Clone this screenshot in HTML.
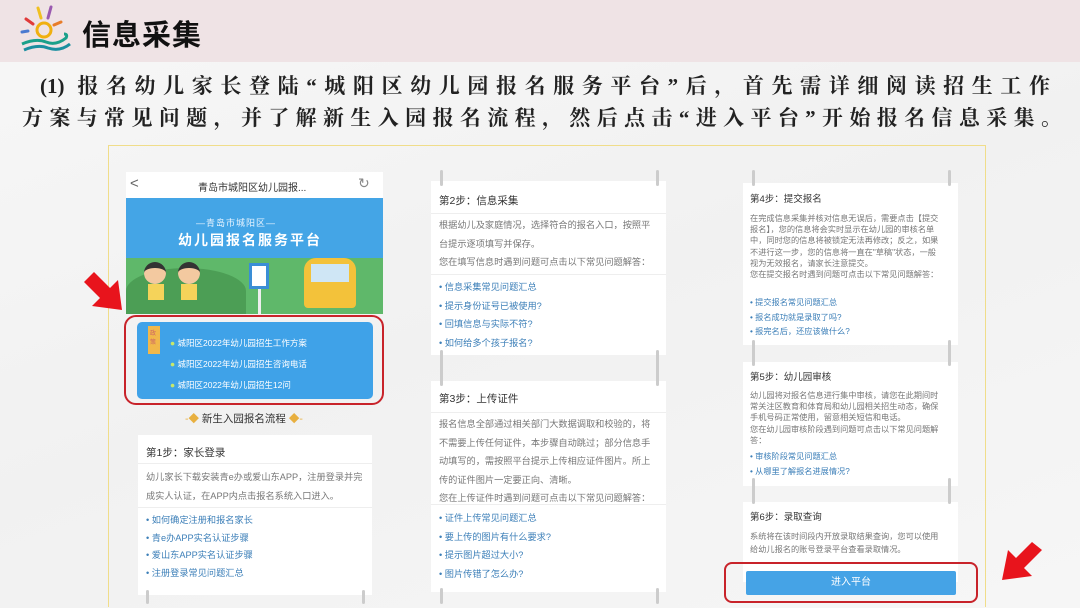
<!DOCTYPE html>
<html><head><meta charset="utf-8">
<style>
*{margin:0;padding:0;box-sizing:border-box}
body{width:1080px;height:608px;overflow:hidden;position:relative;background:linear-gradient(160deg,#f7f7f7 0%,#f1f1f1 50%,#f6f6f6 100%);font-family:"Liberation Sans","Noto Sans CJK SC",sans-serif}
.abs{position:absolute}
.hdr{left:0;top:0;width:1080px;height:62px;background:#efe3e5}
.title{left:82px;top:12px;font-size:29px;font-weight:bold;color:#111;letter-spacing:1px}
.para{font-family:"Liberation Serif","Noto Serif CJK SC",serif;font-weight:bold;font-size:21px;color:#222;white-space:nowrap;text-align:justify;text-align-last:justify}
.frame{left:108px;top:145px;width:878px;height:462px;border:1.5px solid #f0dd8a;border-bottom:none}
.card{background:#fff}
.h{font-size:10.5px;color:#333}
.t{font-size:9.2px;color:#777;line-height:18.5px}
.l{font-size:9.2px;color:#3c7fb8;line-height:18px}
.sm .t,.sm .l{font-size:8.2px;line-height:11.2px}
.sm .h{font-size:9.5px}
.pin{width:3px;background:#ccc;border-radius:2px}
</style></head><body>
<div class="abs hdr"></div>
<svg class="abs" style="left:16px;top:4px" width="60" height="54" viewBox="0 0 60 54">
<g stroke-width="3" stroke-linecap="round"><line x1="22" y1="4" x2="25" y2="14" stroke="#f0c020"/><line x1="35" y1="3" x2="32" y2="14" stroke="#9a5ab0"/><line x1="10" y1="15" x2="17" y2="20" stroke="#e03a3a"/><line x1="45" y1="18" x2="38" y2="21" stroke="#e87c2a"/><line x1="6" y1="28" x2="12" y2="27" stroke="#4a7ad0"/></g>
<circle cx="28" cy="26" r="7" fill="none" stroke="#f0b010" stroke-width="3"/>
<path d="M6 40 Q20 34 30 38 Q40 42 50 34 Q52 30 48 30" fill="none" stroke="#1aa08a" stroke-width="3"/>
<path d="M8 46 Q22 40 32 44 Q44 48 54 40" fill="none" stroke="#1a8fa0" stroke-width="3"/>
</svg>
<div class="abs title">信息采集</div>
<div class="abs para" style="left:40px;top:70px;width:1010px">(1) 报名幼儿家长登陆“城阳区幼儿园报名服务平台”后，首先需详细阅读招生工作</div>
<div class="abs para" style="left:22px;top:102px;width:1040px">方案与常见问题，并了解新生入园报名流程，然后点击“进入平台”开始报名信息采集。</div>
<div class="abs frame"></div>

<!-- col1 -->
<div class="abs card" style="left:126px;top:172px;width:257px;height:26px"></div>
<div class="abs" style="left:130px;top:175px;font-size:15px;color:#666">&lt;</div>
<div class="abs" style="left:198px;top:179px;font-size:10px;color:#333">青岛市城阳区幼儿园报...</div>
<div class="abs" style="left:358px;top:175px;font-size:14px;color:#888">↻</div>
<div class="abs" style="left:126px;top:198px;width:257px;height:116px;background:#44a5e6;overflow:hidden">
 <div class="abs" style="left:0;top:60px;width:257px;height:56px;background:#5fb86a"></div>
 <div class="abs" style="left:0;top:70px;width:120px;height:46px;background:#4c9e55;border-radius:50% 50% 0 0"></div>
 <div class="abs" style="left:70px;top:18px;font-size:9px;color:#e8f4ff;letter-spacing:1px">—青岛市城阳区—</div>
 <div class="abs" style="left:52px;top:32px;font-size:14px;font-weight:bold;color:#fff;letter-spacing:2px">幼儿园报名服务平台</div>
 <div class="abs" style="left:18px;top:64px;width:22px;height:22px;border-radius:50%;background:#f3c9a0;border-top:6px solid #333"></div>
 <div class="abs" style="left:22px;top:86px;width:16px;height:16px;background:#f5d35a"></div>
 <div class="abs" style="left:52px;top:64px;width:22px;height:22px;border-radius:50%;background:#f3c9a0;border-top:6px solid #333"></div>
 <div class="abs" style="left:55px;top:86px;width:16px;height:16px;background:#f5d35a"></div>
 <div class="abs" style="left:123px;top:65px;width:20px;height:26px;background:#fff;border:3px solid #3a8ed6"></div>
 <div class="abs" style="left:132px;top:91px;width:3px;height:25px;background:#eee"></div>
 <div class="abs" style="left:178px;top:60px;width:52px;height:50px;background:#f3c23a;border-radius:12px 12px 4px 4px"></div>
 <div class="abs" style="left:185px;top:66px;width:38px;height:18px;background:#cfe6f5"></div>
</div>
<div class="abs" style="left:137px;top:322px;width:236px;height:77px;background:#3fa2e8;border-radius:5px"></div>
<div class="abs" style="left:148px;top:326px;width:12px;height:28px;background:#f1b84a;font-size:6px;color:#c66;padding:2px">政策</div>
<div class="abs" style="left:170px;top:333px;font-size:8.5px;color:#fff;line-height:21px">
<div><span style="color:#c8e86a">●</span> 城阳区2022年幼儿园招生工作方案</div>
<div><span style="color:#c8e86a">●</span> 城阳区2022年幼儿园招生咨询电话</div>
<div><span style="color:#c8e86a">●</span> 城阳区2022年幼儿园招生12问</div></div>
<div class="abs" style="left:124px;top:315px;width:260px;height:90px;border:2.5px solid #c8232a;border-radius:12px"></div>
<div class="abs" style="left:185px;top:411px;font-size:10.5px;color:#333"><span style="color:#e8b040">-◆</span> 新生入园报名流程 <span style="color:#e8b040">◆-</span></div>
<div class="abs card" style="left:138px;top:435px;width:234px;height:160px">
 <div class="h" style="position:absolute;left:8px;top:10px">第1步：家长登录</div>
 <div style="position:absolute;left:0;top:28px;width:234px;border-top:1px solid #eee"></div>
 <div class="t" style="position:absolute;left:8px;top:33px;width:222px">幼儿家长下载安装青e办或爱山东APP，注册登录并完成实人认证，在APP内点击报名系统入口进入。</div>
 <div style="position:absolute;left:0;top:72px;width:234px;border-top:1px solid #eee"></div>
 <div class="l" style="position:absolute;left:8px;top:77px;line-height:17.5px">• 如何确定注册和报名家长<br>• 青e办APP实名认证步骤<br>• 爱山东APP实名认证步骤<br>• 注册登录常见问题汇总</div>
</div>

<!-- col2 -->
<div class="abs card" style="left:431px;top:181px;width:235px;height:174px">
 <div class="h" style="position:absolute;left:8px;top:12px">第2步：信息采集</div>
 <div style="position:absolute;left:0;top:32px;width:235px;border-top:1px solid #eee"></div>
 <div class="t" style="position:absolute;left:8px;top:35px;width:220px;line-height:18.5px">根据幼儿及家庭情况，选择符合的报名入口，按照平台提示逐项填写并保存。<br>您在填写信息时遇到问题可点击以下常见问题解答：</div>
 <div style="position:absolute;left:0;top:93px;width:235px;border-top:1px solid #eee"></div>
 <div class="l" style="position:absolute;left:8px;top:97px;line-height:18.5px">• 信息采集常见问题汇总<br>• 提示身份证号已被使用?<br>• 回填信息与实际不符?<br>• 如何给多个孩子报名?</div>
</div>
<div class="abs card" style="left:431px;top:381px;width:235px;height:211px">
 <div class="h" style="position:absolute;left:8px;top:10px">第3步：上传证件</div>
 <div style="position:absolute;left:0;top:31px;width:235px;border-top:1px solid #eee"></div>
 <div class="t" style="position:absolute;left:8px;top:34px;width:220px;line-height:18.5px">报名信息全部通过相关部门大数据调取和校验的，将不需要上传任何证件，本步骤自动跳过；部分信息手动填写的，需按照平台提示上传相应证件图片。所上传的证件图片一定要正向、清晰。<br>您在上传证件时遇到问题可点击以下常见问题解答：</div>
 <div style="position:absolute;left:0;top:123px;width:235px;border-top:1px solid #eee"></div>
 <div class="l" style="position:absolute;left:8px;top:128px;line-height:18.5px">• 证件上传常见问题汇总<br>• 要上传的图片有什么要求?<br>• 提示图片超过大小?<br>• 图片传错了怎么办?</div>
</div>

<!-- col3 -->
<div class="sm">
<div class="abs card" style="left:743px;top:183px;width:215px;height:162px">
 <div class="h" style="position:absolute;left:7px;top:8px">第4步：提交报名</div>
 <div class="t" style="position:absolute;left:7px;top:30px;width:194px">在完成信息采集并核对信息无误后，需要点击【提交报名】，您的信息将会实时显示在幼儿园的审核名单中，同时您的信息将被锁定无法再修改；反之，如果不进行这一步，您的信息将一直在"草稿"状态，一般视为无效报名，请家长注意提交。<br>您在提交报名时遇到问题可点击以下常见问题解答：</div>
 <div class="l" style="position:absolute;left:7px;top:113px;line-height:14.5px">• 提交报名常见问题汇总<br>• 报名成功就是录取了吗?<br>• 报完名后，还应该做什么?</div>
</div>
<div class="abs card" style="left:743px;top:362px;width:215px;height:124px">
 <div class="h" style="position:absolute;left:7px;top:7px">第5步：幼儿园审核</div>
 <div class="t" style="position:absolute;left:7px;top:28px;width:196px">幼儿园将对报名信息进行集中审核，请您在此期间时常关注区教育和体育局和幼儿园相关招生动态，确保手机号码正常使用，留意相关短信和电话。<br>您在幼儿园审核阶段遇到问题可点击以下常见问题解答：</div>
 <div class="l" style="position:absolute;left:7px;top:87px;line-height:15px">• 审核阶段常见问题汇总<br>• 从哪里了解报名进展情况?</div>
</div>
<div class="abs card" style="left:743px;top:502px;width:215px;height:80px">
 <div class="h" style="position:absolute;left:7px;top:7px">第6步：录取查询</div>
 <div class="t" style="position:absolute;left:7px;top:28px;width:196px;line-height:13px">系统将在该时间段内开放录取结果查询，您可以使用给幼儿报名的账号登录平台查看录取情况。</div>
</div>
</div>
<div class="abs" style="left:746px;top:571px;width:210px;height:24px;background:#45a3e6;border-radius:2px;color:#fff;font-size:10px;text-align:center;line-height:24px">进入平台</div>
<div class="abs" style="left:724px;top:562px;width:254px;height:41px;border:2.5px solid #c8232a;border-radius:8px"></div>

<!-- pins -->
<div class="abs pin" style="left:440px;top:170px;height:16px"></div><div class="abs pin" style="left:656px;top:170px;height:16px"></div>
<div class="abs pin" style="left:440px;top:350px;height:36px"></div><div class="abs pin" style="left:656px;top:350px;height:36px"></div>
<div class="abs pin" style="left:440px;top:588px;height:16px"></div><div class="abs pin" style="left:656px;top:588px;height:16px"></div>
<div class="abs pin" style="left:752px;top:170px;height:16px"></div><div class="abs pin" style="left:948px;top:170px;height:16px"></div>
<div class="abs pin" style="left:752px;top:340px;height:26px"></div><div class="abs pin" style="left:948px;top:340px;height:26px"></div>
<div class="abs pin" style="left:752px;top:478px;height:26px"></div><div class="abs pin" style="left:948px;top:478px;height:26px"></div>
<div class="abs pin" style="left:146px;top:590px;height:14px"></div><div class="abs pin" style="left:362px;top:590px;height:14px"></div>

<!-- arrows -->
<svg class="abs" style="left:80px;top:268px" width="50" height="50" viewBox="0 0 50 50"><path d="M4 14 L14 4 L30 20 L38 12 L42 42 L12 38 L20 30 Z" fill="#e8141c"/></svg>
<svg class="abs" style="left:996px;top:540px" width="50" height="45" viewBox="0 0 50 45"><path d="M46 10 L36 2 L20 18 L12 10 L6 40 L36 36 L28 28 Z" fill="#e8141c"/></svg>
</body></html>
